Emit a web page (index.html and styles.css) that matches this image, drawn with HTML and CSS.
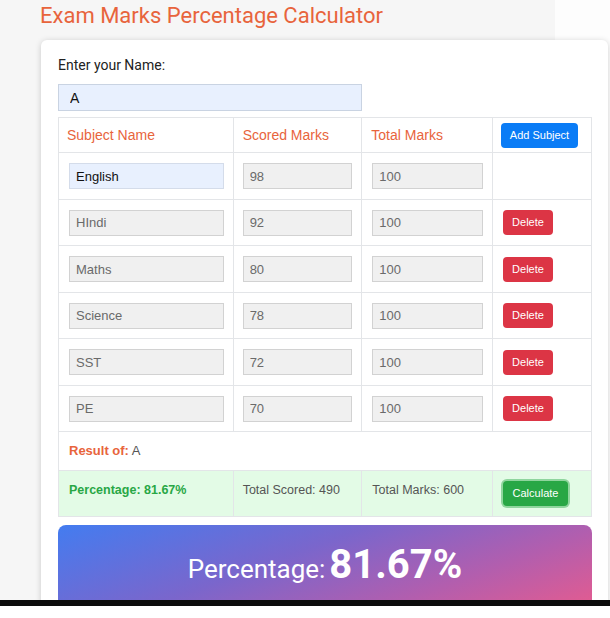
FILE: index.html
```html
<!DOCTYPE html>
<html>
<head>
<meta charset="utf-8">
<link rel="stylesheet" href="styles.css">
</head>
<body>
<div class="viewport">
<div class="page">
  <h1 class="title">Exam Marks Percentage Calculator</h1>
  <div class="card">
    <label class="name-label">Enter your Name:</label>
    <input class="name-input" type="text" value="A">
    <table class="marks">
      <colgroup>
        <col class="c1"><col class="c2"><col class="c3"><col class="c4">
      </colgroup>
      <thead>
        <tr>
          <th>Subject Name</th>
          <th>Scored Marks</th>
          <th>Total Marks</th>
          <th><button class="btn btn-blue">Add Subject</button></th>
        </tr>
      </thead>
      <tbody>
        <tr>
          <td><input class="field field-active" value="English"></td>
          <td><input class="field" value="98"></td>
          <td><input class="field" value="100"></td>
          <td></td>
        </tr>
        <tr>
          <td><input class="field" value="HIndi"></td>
          <td><input class="field" value="92"></td>
          <td><input class="field" value="100"></td>
          <td><button class="btn btn-red">Delete</button></td>
        </tr>
        <tr>
          <td><input class="field" value="Maths"></td>
          <td><input class="field" value="80"></td>
          <td><input class="field" value="100"></td>
          <td><button class="btn btn-red">Delete</button></td>
        </tr>
        <tr>
          <td><input class="field" value="Science"></td>
          <td><input class="field" value="78"></td>
          <td><input class="field" value="100"></td>
          <td><button class="btn btn-red">Delete</button></td>
        </tr>
        <tr>
          <td><input class="field" value="SST"></td>
          <td><input class="field" value="72"></td>
          <td><input class="field" value="100"></td>
          <td><button class="btn btn-red">Delete</button></td>
        </tr>
        <tr>
          <td><input class="field" value="PE"></td>
          <td><input class="field" value="70"></td>
          <td><input class="field" value="100"></td>
          <td><button class="btn btn-red">Delete</button></td>
        </tr>
        <tr class="result-row">
          <td colspan="4"><span class="result-label">Result of:</span> A</td>
        </tr>
        <tr class="summary-row">
          <td class="pct">Percentage: 81.67%</td>
          <td>Total Scored: 490</td>
          <td>Total Marks: 600</td>
          <td><button class="btn btn-green">Calculate</button></td>
        </tr>
      </tbody>
    </table>
    <div class="banner">
      <span class="banner-label">Percentage:</span> <span class="banner-value">81.67%</span>
    </div>
  </div>
</div>
</div>
<div class="bottom-bar"></div>
</body>
</html>
```
FILE: styles.css
```css
html, body {
  margin: 0;
  padding: 0;
  background: #ffffff;
  overflow: hidden;
  height: 618px;
}

.viewport {
  height: 600px;
  overflow: hidden;
  background: #fdfdfd;
}

.page {
  width: 515px;
  height: 600px;
  padding-left: 40px;
  background: #f6f6f6;
  font-family: Roboto, "Liberation Sans", sans-serif;
}

.title {
  margin: 0;
  padding-top: 3px;
  height: 40px;
  box-sizing: border-box;
  font-size: 22px;
  font-weight: 400;
  line-height: 26px;
  color: #e8643c;
  white-space: nowrap;
}

.card {
  margin-left: 1px;
  width: 567px;
  box-sizing: border-box;
  background: #ffffff;
  border-radius: 6px;
  box-shadow: 0 1px 6px rgba(0, 0, 0, 0.18);
  padding: 14px 16px 0 17px;
  height: 600px;
}

.name-label {
  display: block;
  font-size: 14px;
  color: #222;
  line-height: 20px;
  margin-top: 1px;
}

.name-input {
  display: block;
  margin-top: 9px;
  width: 304px;
  height: 27px;
  box-sizing: border-box;
  border: 1px solid #c9d3e2;
  background: #e8f0fe;
  padding: 0 11px;
  font-family: "Liberation Sans", Arial, sans-serif;
  font-size: 14px;
  color: #111;
  outline: none;
}

.marks {
  margin-top: 6px;
  width: 534px;
  border-collapse: collapse;
  font-family: "Liberation Sans", Arial, sans-serif;
  font-size: 12.5px;
  color: #555;
}

.c1 { width: 175px; }
.c2 { width: 129px; }
.c3 { width: 131px; }
.c4 { width: 99px; }

.marks th,
.marks td {
  border: 1px solid #e3e5e8;
  text-align: left;
  vertical-align: middle;
}

.marks th {
  padding: 4px 9px 4px 9px;
  height: 26px;
  font-size: 14px;
  font-weight: 400;
  color: #e8643c;
  line-height: 16px;
}

.marks th:first-child { padding-left: 8px; }
.marks th:last-child { padding-left: 8px; }

.marks td {
  padding: 10px 9px 9.5px 10px;
}

.marks td:nth-child(2) { padding-left: 9px; }

.field {
  display: block;
  width: 100%;
  height: 26px;
  box-sizing: border-box;
  border: 1px solid #d2d2d2;
  background: #f0f0f0;
  padding: 0 6px;
  font-family: "Liberation Sans", Arial, sans-serif;
  font-size: 13px;
  color: #6a6a6a;
  outline: none;
}

.field-active {
  background: #e8f0fe;
  border-color: #d4dcea;
  color: #111;
}

.btn {
  display: inline-block;
  border: none;
  border-radius: 4px;
  color: #ffffff;
  font-family: "Liberation Sans", Arial, sans-serif;
  font-size: 11px;
  height: 25px;
  line-height: 25px;
  padding: 0;
  cursor: pointer;
}

.btn-blue {
  background: #0a7cf6;
  width: 77px;
}

.btn-red {
  background: #dc3545;
  width: 50px;
}

.btn-green {
  background: #28a745;
  width: 65px;
  box-shadow: 0 0 0 2px rgba(40, 167, 69, 0.45);
  margin-top: 2px;
}

.marks .result-row td {
  padding: 11px 10px 12px 10px;
  font-size: 13px;
  line-height: 15px;
  color: #555;
}

.result-label {
  color: #e8643c;
  font-weight: 700;
}

.summary-row td {
  background: #e3fbe6;
  height: 26px;
  vertical-align: top;
  padding-top: 12px !important;
  padding-bottom: 7px !important;
  line-height: 15px;
  color: #555;
}

.summary-row td:last-child {
  padding-top: 8px !important;
}

.marks .pct {
  color: #28a745;
  font-weight: 700;
}

.banner {
  margin-top: 8px;
  width: 534px;
  border-radius: 8px;
  background: linear-gradient(160deg, #437cf0 0%, #7a66cc 40%, #b25eae 70%, #ea5b8c 100%);
  color: #ffffff;
  text-align: center;
  padding: 16px 0 20px;
  font-family: Roboto, "Liberation Sans", sans-serif;
  line-height: 48px;
}

.banner-label {
  font-size: 26px;
}

.banner-value {
  font-size: 40px;
  font-weight: 700;
}

.bottom-bar {
  position: fixed;
  left: 0;
  right: 0;
  top: 600px;
  height: 6px;
  background: #0c0c0c;
}
```
